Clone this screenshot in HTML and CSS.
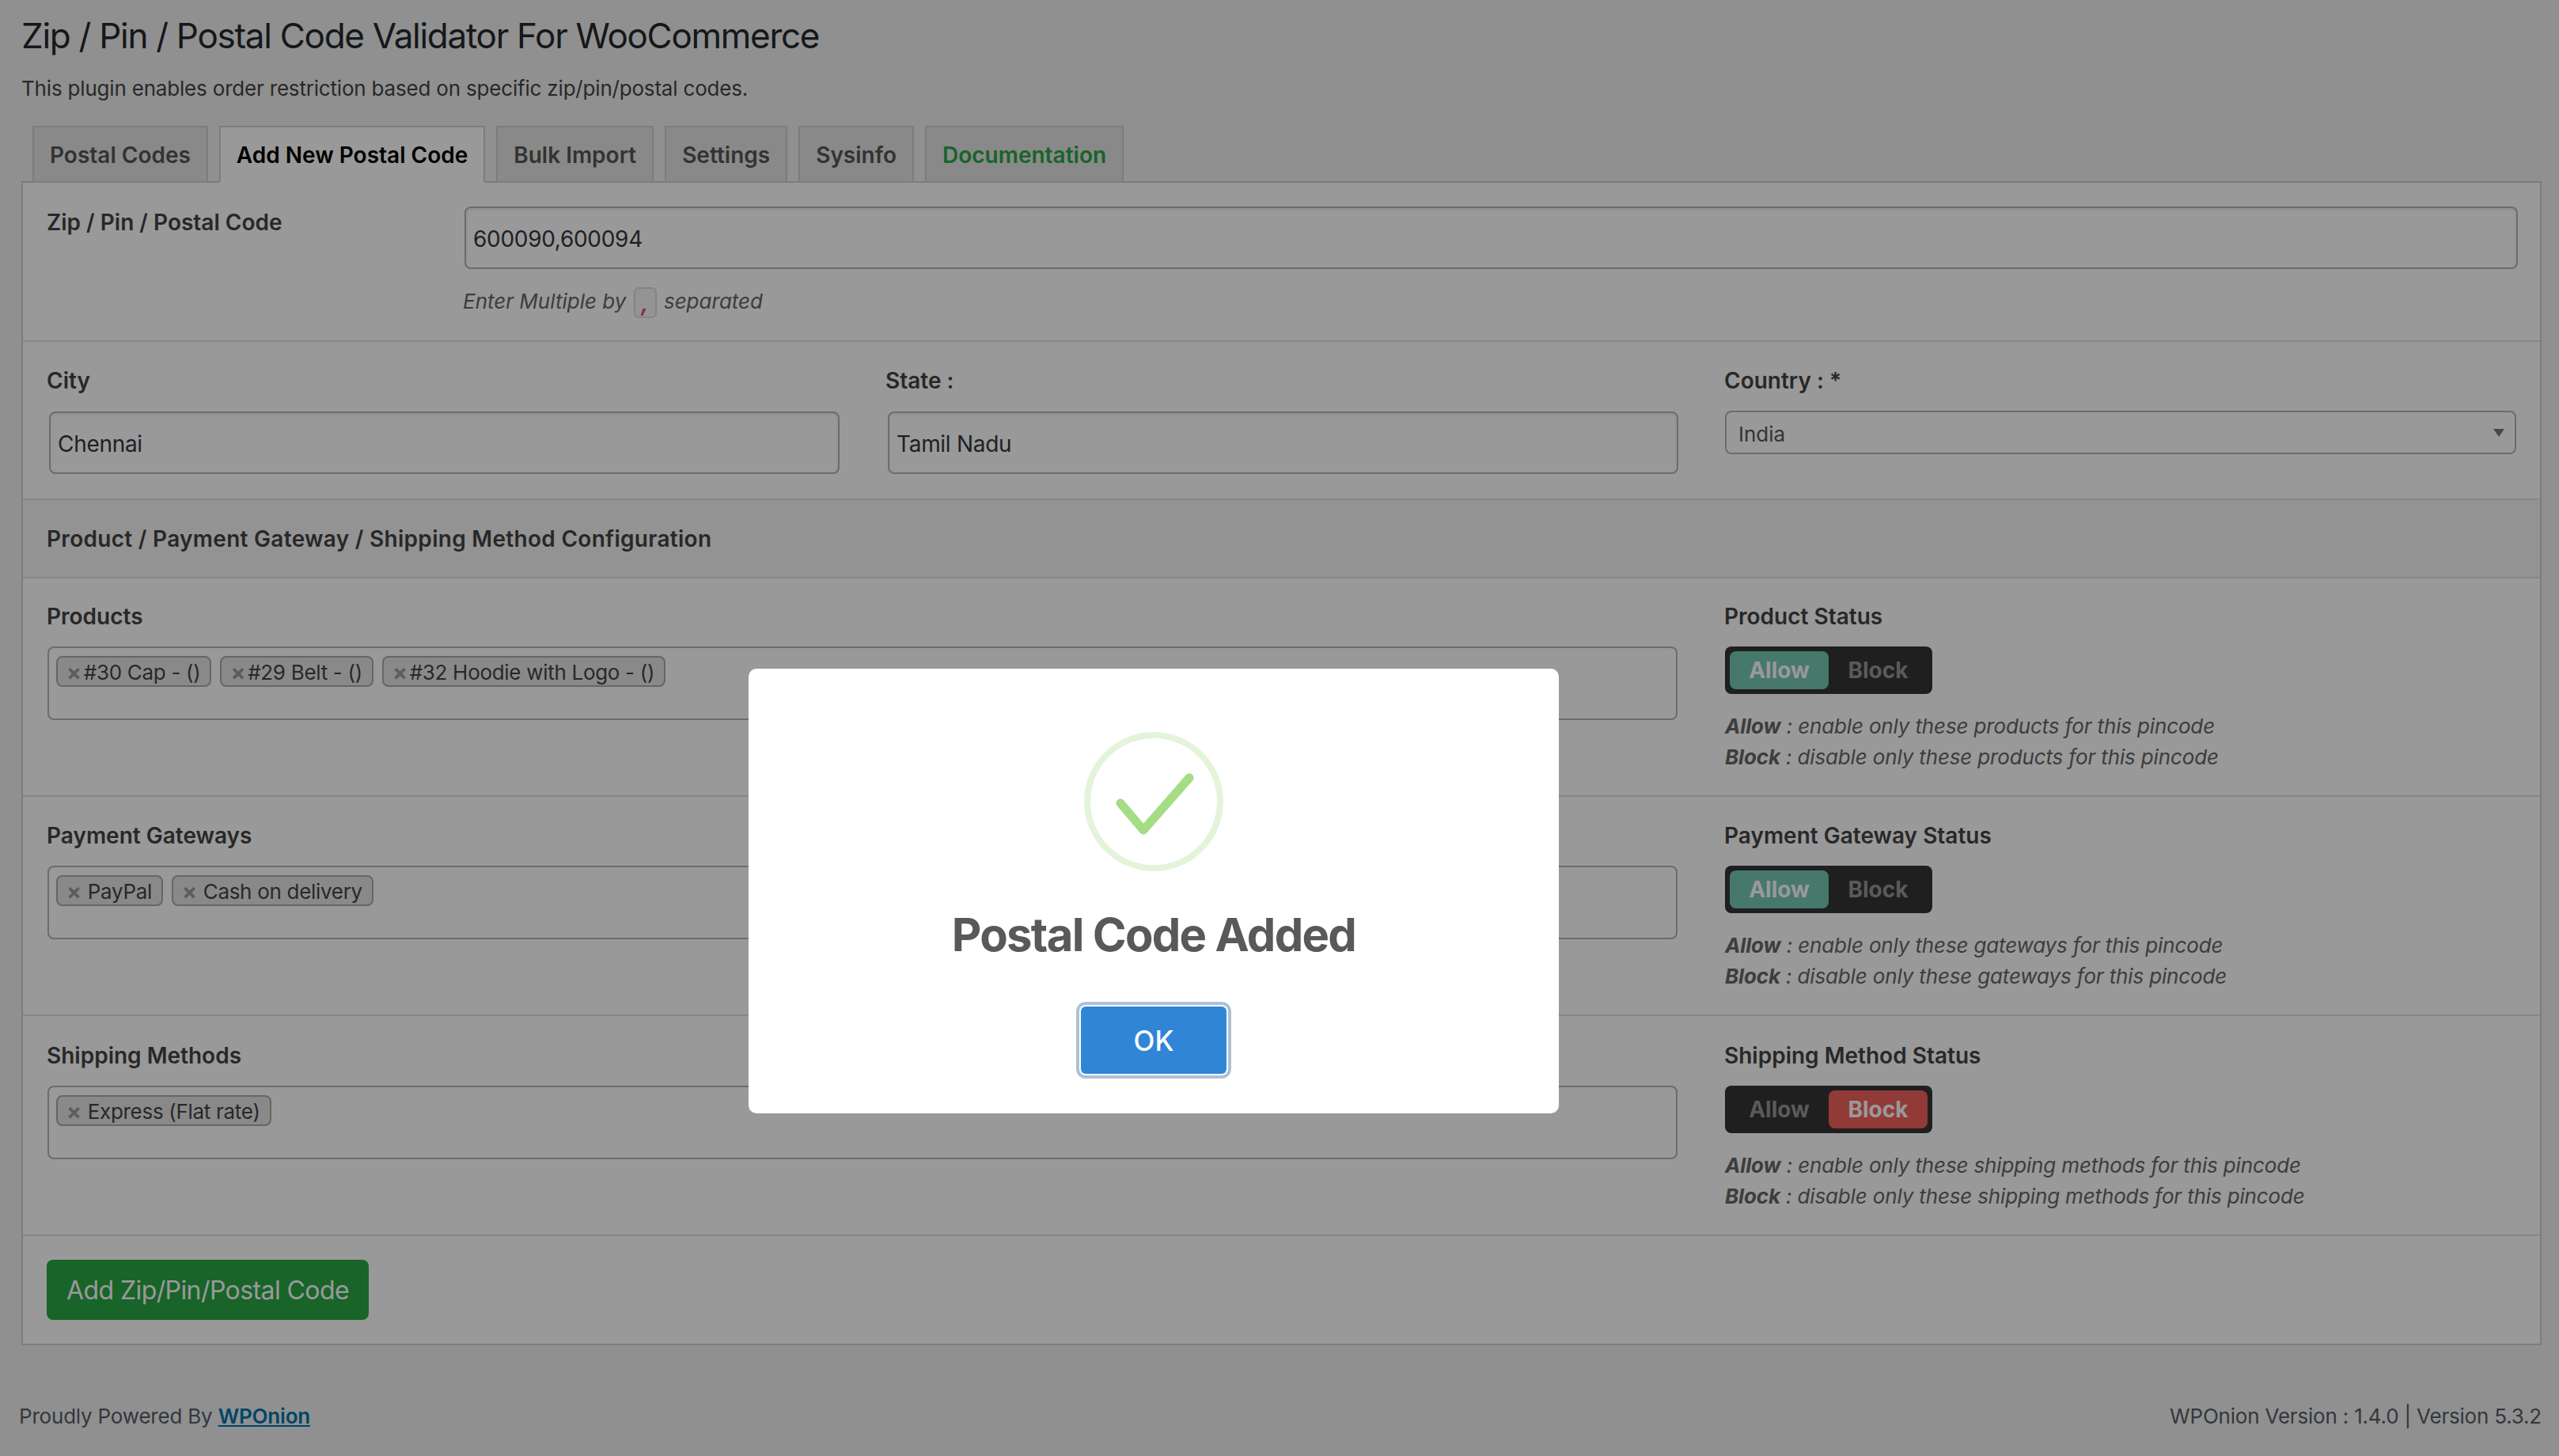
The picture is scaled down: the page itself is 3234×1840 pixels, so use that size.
FILE: index.html
```html
<!DOCTYPE html>
<html lang="en">
<head>
    <meta charset="UTF-8">
    <title>Zip / Pin / Postal Code Validator For WooCommerce</title>
    <link rel="stylesheet" href="styles.css">
</head>
<body>
    <div class="wrap">
        <h1>Zip / Pin / Postal Code Validator For WooCommerce</h1>
        <p class="intro">This plugin enables order restriction based on specific zip/pin/postal codes.</p>

        <nav class="tabs">
            <a class="tab">Postal Codes</a>
            <a class="tab active">Add New Postal Code</a>
            <a class="tab">Bulk Import</a>
            <a class="tab">Settings</a>
            <a class="tab">Sysinfo</a>
            <a class="tab docs">Documentation</a>
        </nav>

        <form class="panel">
            <div class="row zip-row">
                <label class="label">Zip / Pin / Postal Code</label>
                <div>
                    <input class="input" type="text" value="600090,600094">
                    <p class="zip-help">Enter Multiple by <code>,</code> separated</p>
                </div>
            </div>

            <div class="row location-row">
                <div>
                    <label class="label">City</label>
                    <input class="input" type="text" value="Chennai">
                </div>
                <div>
                    <label class="label">State :</label>
                    <input class="input" type="text" value="Tamil Nadu">
                </div>
                <div>
                    <label class="label">Country : *</label>
                    <div class="select-wrap">
                        <select class="select"><option>India</option></select>
                    </div>
                </div>
            </div>

            <div class="section-head">Product / Payment Gateway / Shipping Method Configuration</div>

            <div class="row config-row products">
                <div>
                    <label class="label">Products</label>
                    <div class="multi">
                        <span class="tag"><i>×</i>#30 Cap - ()</span>
                        <span class="tag"><i>×</i>#29 Belt - ()</span>
                        <span class="tag"><i>×</i>#32 Hoodie with Logo - ()</span>
                    </div>
                </div>
                <div>
                    <label class="label">Product Status</label>
                    <div class="toggle">
                        <span class="allow on">Allow</span>
                        <span class="block">Block</span>
                    </div>
                    <p class="help"><b>Allow</b> : enable only these products for this pincode</p>
                    <p class="help"><b>Block</b> : disable only these products for this pincode</p>
                </div>
            </div>

            <div class="row config-row gateways">
                <div>
                    <label class="label">Payment Gateways</label>
                    <div class="multi">
                        <span class="tag spaced"><i>×</i>PayPal</span>
                        <span class="tag spaced"><i>×</i>Cash on delivery</span>
                    </div>
                </div>
                <div>
                    <label class="label">Payment Gateway Status</label>
                    <div class="toggle">
                        <span class="allow on">Allow</span>
                        <span class="block">Block</span>
                    </div>
                    <p class="help"><b>Allow</b> : enable only these gateways for this pincode</p>
                    <p class="help"><b>Block</b> : disable only these gateways for this pincode</p>
                </div>
            </div>

            <div class="row config-row shipping">
                <div>
                    <label class="label">Shipping Methods</label>
                    <div class="multi">
                        <span class="tag spaced"><i>×</i>Express (Flat rate)</span>
                    </div>
                </div>
                <div>
                    <label class="label">Shipping Method Status</label>
                    <div class="toggle">
                        <span class="allow">Allow</span>
                        <span class="block on">Block</span>
                    </div>
                    <p class="help"><b>Allow</b> : enable only these shipping methods for this pincode</p>
                    <p class="help"><b>Block</b> : disable only these shipping methods for this pincode</p>
                </div>
            </div>

            <div class="submit-row">
                <button class="submit" type="button">Add Zip/Pin/Postal Code</button>
            </div>
        </form>
    </div>

    <footer class="footer">
        <span>Proudly Powered By <a href="#">WPOnion</a></span>
        <span>WPOnion Version : 1.4.0 | Version 5.3.2</span>
    </footer>

    <div class="overlay">
        <div class="modal">
            <svg class="check" width="176" height="176" viewBox="0 0 176 176">
                <circle cx="88" cy="88" r="84" fill="none" stroke="#a5dc86" stroke-opacity="0.3" stroke-width="8"/>
                <path d="M46 90 L75 124 L133 58" fill="none" stroke="#a5dc86" stroke-width="11" stroke-linecap="round" stroke-linejoin="round"/>
            </svg>
            <h2>Postal Code Added</h2>
            <button class="ok" type="button">OK</button>
        </div>
    </div>
</body>
</html>
```

FILE: styles.css
```css
* {
    box-sizing: border-box;
}
body {
    margin: 0;
    background-color: #f1f1f1;
    font-family: Inter, "Noto Sans", sans-serif;
    color: #444;
    font-size: 26px;
}
.wrap {
    padding: 16px 22px 0 27px;
}
h1 {
    margin: 0;
    font-size: 44px;
    font-weight: 400;
    line-height: 58px;
    letter-spacing: -1.28px;
    color: #23282d;
}
.intro {
    margin: 20px 0 29px;
    line-height: 36px;
    letter-spacing: -0.19px;
}
.tabs {
    display: flex;
    gap: 14px;
    padding-left: 14px;
    margin-bottom: -2px;
    position: relative;
}
.tab {
    height: 72px;
    padding: 2px 20px 0;
    display: flex;
    align-items: center;
    border: 2px solid #ccd0d4;
    background-color: #e5e5e5;
    font-size: 28px;
    font-weight: 600;
    color: #555;
}
.tab.active {
    background-color: #fff;
    border-bottom-color: #fff;
    color: #000;
}
.tab.docs {
    color: #28a745;
}
.panel {
    border: 2px solid #ccd0d4;
    background-color: #fff;
}
.row {
    border-bottom: 2px solid #e1e1e1;
    padding: 30px 30px 0 31px;
}
.label {
    display: block;
    margin-left: -1px;
    font-size: 28px;
    font-weight: 600;
    line-height: 36px;
    color: #444;
}
.input {
    display: block;
    width: 100%;
    height: 79px;
    padding: 2px 9px 0;
    border: 2px solid #b4b4b4;
    border-radius: 8px;
    box-shadow: inset 0 2px 4px rgba(0, 0, 0, 0.07);
    background-color: #fff;
    font-family: inherit;
    font-size: 28px;
    letter-spacing: -0.3px;
    color: #32373c;
}
.zip-row {
    height: 201px;
    padding-right: 28px;
    display: grid;
    grid-template-columns: 527px 1fr;
}
.zip-row .label {
    margin-top: 2px;
}
.zip-help {
    margin: 21px 0 0 -2px;
    font-style: italic;
    color: #666;
    line-height: 40px;
}
.zip-help code {
    display: inline-block;
    width: 29px;
    height: 39px;
    margin: 0 2px;
    border: 2px solid #ddd;
    border-radius: 6px;
    background-color: #f6f6f6;
    font-family: inherit;
    font-size: 30px;
    font-weight: 600;
    color: #e83e8c;
    text-align: center;
    vertical-align: middle;
    line-height: 35px;
}
.location-row {
    height: 200px;
    padding-top: 31px;
    display: grid;
    grid-template-columns: repeat(3, 1fr);
    gap: 60px;
}
.location-row .input {
    margin: 21px 0 0 2px;
    width: calc(100% - 1px);
}
.select-wrap {
    position: relative;
    margin-top: 20px;
}
.select-wrap::after {
    content: "";
    position: absolute;
    right: 15px;
    top: 23px;
    border-left: 7px solid transparent;
    border-right: 7px solid transparent;
    border-top: 10px solid #777;
}
.select {
    display: block;
    width: 100%;
    height: 55px;
    padding: 4px 15px 0;
    appearance: none;
    border: 2px solid #b4b4b4;
    border-radius: 8px;
    background-color: #fff;
    font-family: inherit;
    font-size: 26px;
    color: #555;
}
.section-head {
    height: 99px;
    padding: 0 30px;
    display: flex;
    align-items: center;
    border-bottom: 2px solid #e1e1e1;
    background-color: #f5f5f5;
    font-size: 28px;
    font-weight: 600;
    letter-spacing: 0.29px;
    color: #444;
}
.config-row {
    display: grid;
    grid-template-columns: 2060px 1000px;
    gap: 60px;
}
.products {
    height: 276px;
}
.gateways {
    height: 277px;
    padding-top: 31px;
}
.shipping {
    height: 278px;
    padding-top: 32px;
}
.multi {
    margin-top: 20px;
    height: 93px;
    padding: 10px 9px;
    display: flex;
    gap: 11px;
    align-items: flex-start;
    border: 2px solid #b4b4b4;
    border-radius: 8px;
}
.tag {
    height: 39px;
    padding: 2px 12px 0 11px;
    display: flex;
    align-items: center;
    border: 2px solid #aaa;
    border-radius: 8px;
    background-color: #e4e4e4;
    font-size: 26px;
    letter-spacing: -0.3px;
    color: #444;
    white-space: nowrap;
}
.tag i {
    margin-right: 3px;
    font-style: normal;
    font-weight: 700;
    font-size: 28px;
    color: #999;
}
.tag.spaced i {
    margin-right: 8px;
}
.toggle {
    margin: 20px 0 21px;
    width: 262px;
    height: 60px;
    padding: 6px;
    display: flex;
    border-radius: 8px;
    background-color: #353535;
}
.toggle span {
    width: 125px;
    display: flex;
    align-items: center;
    justify-content: center;
    border-radius: 8px;
    font-size: 28px;
    font-weight: 700;
    color: #969696;
}
.toggle .allow.on {
    background-color: #76c8b4;
    color: #fff;
}
.toggle .block.on {
    background-color: #f3615c;
    color: #fff;
}
.help {
    margin: 0;
    font-style: italic;
    line-height: 39px;
    letter-spacing: -0.15px;
    color: #666;
}
.submit-row {
    padding: 30px 31px 30px;
}
.submit {
    display: block;
    width: 407px;
    height: 76px;
    margin-left: -1px;
    padding: 0;
    border: none;
    border-radius: 8px;
    background-color: #28a745;
    font-family: inherit;
    font-size: 32px;
    letter-spacing: -0.58px;
    color: #fff;
}
.footer {
    padding: 72px 22px 0 24px;
    display: flex;
    justify-content: space-between;
    line-height: 36px;
    letter-spacing: -0.2px;
    color: #555d66;
}
.footer a {
    font-weight: 600;
    color: #0073aa;
}
.overlay {
    position: fixed;
    inset: 0;
    background-color: rgba(0, 0, 0, 0.4);
}
.modal {
    position: absolute;
    left: 946px;
    top: 845px;
    width: 1024px;
    height: 562px;
    padding-top: 80px;
    display: flex;
    flex-direction: column;
    align-items: center;
    border-radius: 10px;
    background-color: #fff;
}
.modal h2 {
    margin: 44px 0 0;
    font-size: 58px;
    font-weight: 700;
    line-height: 72px;
    letter-spacing: -1.7px;
    color: #595959;
}
.ok {
    margin-top: 55px;
    width: 184px;
    height: 85px;
    border: none;
    border-radius: 6px;
    background-color: #3085d6;
    box-shadow: 0 0 0 2px #fff, 0 0 0 6px rgba(50, 100, 150, 0.4);
    font-family: inherit;
    font-size: 35px;
    font-weight: 500;
    color: #fff;
}
```
